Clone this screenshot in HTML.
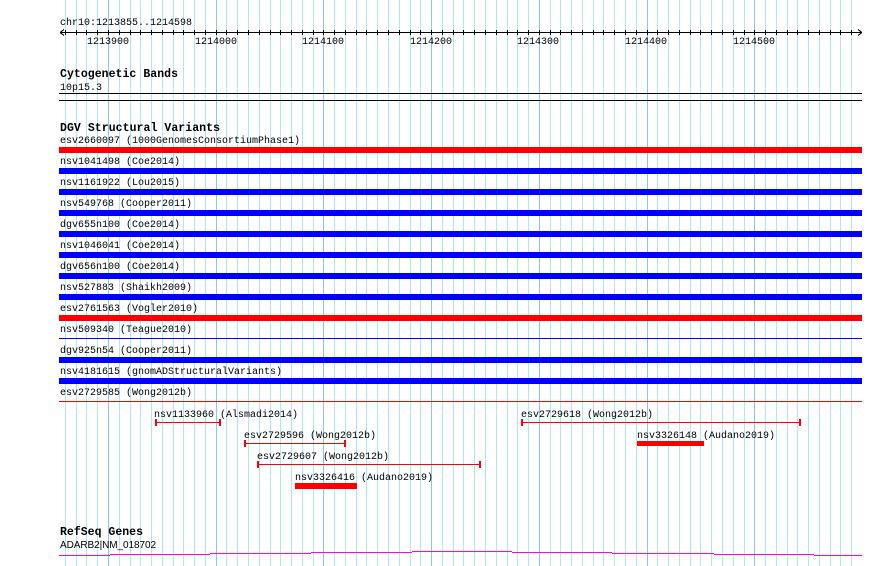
<!DOCTYPE html>
<html><head><meta charset="utf-8"><style>
html,body{margin:0;padding:0;background:#fff;width:890px;height:566px;overflow:hidden}
svg{display:block}
text{font-family:"Liberation Mono",monospace;font-size:10px;fill:#000}
.b{font-weight:bold;font-size:11.5px}
</style></head><body>
<svg width="890" height="566" viewBox="0 0 890 566" shape-rendering="crispEdges">
<g stroke="#b0e8f0" stroke-width="1">
<path d="M65.5 0V566M76.5 0V566M86.5 0V566M97.5 0V566M119.5 0V566M130.5 0V566M140.5 0V566M151.5 0V566M162.5 0V566M173.5 0V566M183.5 0V566M194.5 0V566M205.5 0V566M226.5 0V566M237.5 0V566M248.5 0V566M259.5 0V566M270.5 0V566M280.5 0V566M291.5 0V566M302.5 0V566M313.5 0V566M334.5 0V566M345.5 0V566M356.5 0V566M366.5 0V566M377.5 0V566M388.5 0V566M399.5 0V566M410.5 0V566M420.5 0V566M442.5 0V566M453.5 0V566M463.5 0V566M474.5 0V566M485.5 0V566M496.5 0V566M507.5 0V566M517.5 0V566M528.5 0V566M550.5 0V566M560.5 0V566M571.5 0V566M582.5 0V566M593.5 0V566M603.5 0V566M614.5 0V566M625.5 0V566M636.5 0V566M657.5 0V566M668.5 0V566M679.5 0V566M690.5 0V566M700.5 0V566M711.5 0V566M722.5 0V566M733.5 0V566M744.5 0V566M765.5 0V566M776.5 0V566M787.5 0V566M797.5 0V566M808.5 0V566M819.5 0V566M830.5 0V566M840.5 0V566M851.5 0V566"/>
</g>
<g stroke="#88c8f0" stroke-width="1">
<path d="M108.5 0V566M216.5 0V566M323.5 0V566M431.5 0V566M539.5 0V566M647.5 0V566M754.5 0V566"/>
</g>
<text x="60" y="25">chr10:1213855..1214598</text>
<g stroke="#000" stroke-width="1" fill="none">
<path d="M60 32.5H862"/>
<path d="M60 32.5l4 -3M60 32.5l4 3M862 32.5l-4 -3M862 32.5l-4 3"/>
<path d="M65.5 30V35M76.5 30V35M86.5 30V35M97.5 30V35M108.5 30V35M119.5 30V35M130.5 30V35M140.5 30V35M151.5 30V35M162.5 30V35M173.5 30V35M183.5 30V35M194.5 30V35M205.5 30V35M216.5 30V35M226.5 30V35M237.5 30V35M248.5 30V35M259.5 30V35M270.5 30V35M280.5 30V35M291.5 30V35M302.5 30V35M313.5 30V35M323.5 30V35M334.5 30V35M345.5 30V35M356.5 30V35M366.5 30V35M377.5 30V35M388.5 30V35M399.5 30V35M410.5 30V35M420.5 30V35M431.5 30V35M442.5 30V35M453.5 30V35M463.5 30V35M474.5 30V35M485.5 30V35M496.5 30V35M507.5 30V35M517.5 30V35M528.5 30V35M539.5 30V35M550.5 30V35M560.5 30V35M571.5 30V35M582.5 30V35M593.5 30V35M603.5 30V35M614.5 30V35M625.5 30V35M636.5 30V35M647.5 30V35M657.5 30V35M668.5 30V35M679.5 30V35M690.5 30V35M700.5 30V35M711.5 30V35M722.5 30V35M733.5 30V35M744.5 30V35M754.5 30V35M765.5 30V35M776.5 30V35M787.5 30V35M797.5 30V35M808.5 30V35M819.5 30V35M830.5 30V35M840.5 30V35M851.5 30V35"/>
</g>
<text x="87" y="44">1213900</text>
<text x="195" y="44">1214000</text>
<text x="302" y="44">1214100</text>
<text x="410" y="44">1214200</text>
<text x="517" y="44">1214300</text>
<text x="625" y="44">1214400</text>
<text x="733" y="44">1214500</text>
<text class="b" x="60" y="77" textLength="118">Cytogenetic Bands</text>
<text x="60" y="90">10p15.3</text>
<rect x="59" y="93" width="803" height="1" fill="#000"/>
<rect x="59" y="100" width="803" height="1" fill="#000"/>
<text class="b" x="60" y="131" textLength="160">DGV Structural Variants</text>
<text x="60" y="143">esv2660097 (1000GenomesConsortiumPhase1)</text>
<rect x="59" y="147" width="803" height="6" fill="#f00"/>
<text x="60" y="164">nsv1041498 (Coe2014)</text>
<rect x="59" y="168" width="803" height="6" fill="#00f"/>
<text x="60" y="185">nsv1161922 (Lou2015)</text>
<rect x="59" y="189" width="803" height="6" fill="#00f"/>
<text x="60" y="206">nsv549768 (Cooper2011)</text>
<rect x="59" y="210" width="803" height="6" fill="#00f"/>
<text x="60" y="227">dgv655n100 (Coe2014)</text>
<rect x="59" y="231" width="803" height="6" fill="#00f"/>
<text x="60" y="248">nsv1046041 (Coe2014)</text>
<rect x="59" y="252" width="803" height="6" fill="#00f"/>
<text x="60" y="269">dgv656n100 (Coe2014)</text>
<rect x="59" y="273" width="803" height="6" fill="#00f"/>
<text x="60" y="290">nsv527883 (Shaikh2009)</text>
<rect x="59" y="294" width="803" height="6" fill="#00f"/>
<text x="60" y="311">esv2761563 (Vogler2010)</text>
<rect x="59" y="315" width="803" height="6" fill="#f00"/>
<text x="60" y="332">nsv509340 (Teague2010)</text>
<rect x="59" y="338" width="803" height="1" fill="#00f"/>
<text x="60" y="353">dgv925n54 (Cooper2011)</text>
<rect x="59" y="357" width="803" height="6" fill="#00f"/>
<text x="60" y="374">nsv4181615 (gnomADStructuralVariants)</text>
<rect x="59" y="378" width="803" height="6" fill="#00f"/>
<text x="60" y="395">esv2729585 (Wong2012b)</text>
<rect x="59" y="401" width="803" height="1" fill="#f00"/>
<text x="154" y="417">nsv1133960 (Alsmadi2014)</text>
<text x="521" y="417">esv2729618 (Wong2012b)</text>
<text x="244" y="438">esv2729596 (Wong2012b)</text>
<text x="637" y="438">nsv3326148 (Audano2019)</text>
<text x="257" y="459">esv2729607 (Wong2012b)</text>
<text x="295" y="480">nsv3326416 (Audano2019)</text>
<g fill="#f00">
<rect x="156" y="422" width="64" height="1"/><rect x="155" y="419" width="2" height="7"/><rect x="219" y="419" width="2" height="7"/>
<rect x="521" y="422" width="280" height="1"/><rect x="521" y="419" width="2" height="7"/><rect x="799" y="419" width="2" height="7"/>
<rect x="245" y="443" width="100" height="1"/><rect x="244" y="440" width="2" height="7"/><rect x="344" y="440" width="2" height="7"/>
<rect x="637" y="441" width="67" height="5"/>
<rect x="258" y="464" width="222" height="1"/><rect x="257" y="461" width="2" height="7"/><rect x="479" y="461" width="2" height="7"/>
<rect x="295" y="483" width="62" height="6"/>
</g>
<text class="b" x="60" y="535" textLength="83">RefSeq Genes</text>
<text x="60" y="548" style="font-family:'Liberation Sans',sans-serif;font-size:10px" textLength="96">ADARB2|NM_018702</text>
<g fill="#f0f">
<rect x="59" y="555" width="51" height="1"/>
<rect x="110" y="554" width="100" height="1"/>
<rect x="210" y="553" width="101" height="1"/>
<rect x="311" y="552" width="101" height="1"/>
<rect x="412" y="551" width="100" height="1"/>
<rect x="512" y="552" width="100" height="1"/>
<rect x="612" y="553" width="102" height="1"/>
<rect x="714" y="554" width="100" height="1"/>
<rect x="814" y="555" width="48" height="1"/>
</g>
</svg>
</body></html>
